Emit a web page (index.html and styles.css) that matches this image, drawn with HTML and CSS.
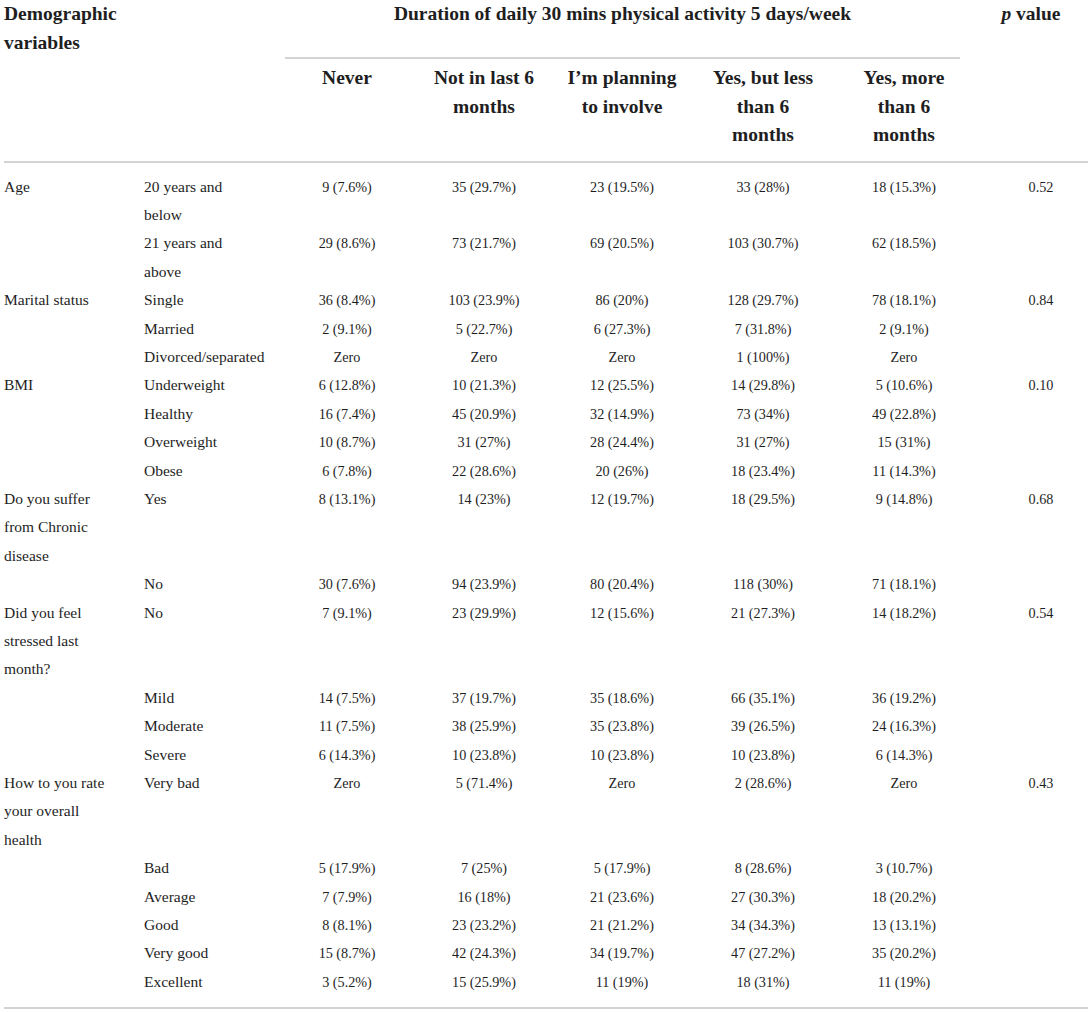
FILE: index.html
```html
<!DOCTYPE html>
<html lang="en">
<head>
<meta charset="utf-8">
<title>Duration of daily physical activity by demographic variables</title>
<link rel="stylesheet" href="styles.css">
</head>
<body>
<table class="stats">
  <colgroup>
    <col class="c-var"><col class="c-sub"><col class="c-never"><col class="c-notin"><col class="c-plan"><col class="c-less"><col class="c-more"><col class="c-p">
  </colgroup>
  <thead>
    <tr class="head-top">
      <th class="h-var" colspan="2" rowspan="2">Demographic<br>variables</th>
      <th class="h-span" colspan="5"><div class="span-title">Duration of daily 30 mins physical activity 5 days/week</div></th>
      <th class="h-p" rowspan="2"><i>p</i> value</th>
    </tr>
    <tr class="head-sub">
      <th>Never</th>
      <th>Not in last 6<br>months</th>
      <th>I’m planning<br>to involve</th>
      <th>Yes, but less<br>than 6<br>months</th>
      <th>Yes, more<br>than 6<br>months</th>
    </tr>
  </thead>
  <tbody>
    <tr class="first">
      <td class="lbl">Age</td><td class="lbl">20 years and<br>below</td>
      <td class="num">9 (7.6%)</td><td class="num">35 (29.7%)</td><td class="num">23 (19.5%)</td><td class="num">33 (28%)</td><td class="num">18 (15.3%)</td><td class="num pv">0.52</td>
    </tr>
    <tr>
      <td class="lbl"></td><td class="lbl">21 years and<br>above</td>
      <td class="num">29 (8.6%)</td><td class="num">73 (21.7%)</td><td class="num">69 (20.5%)</td><td class="num">103 (30.7%)</td><td class="num">62 (18.5%)</td><td class="num pv"></td>
    </tr>
    <tr>
      <td class="lbl">Marital status</td><td class="lbl">Single</td>
      <td class="num">36 (8.4%)</td><td class="num">103 (23.9%)</td><td class="num">86 (20%)</td><td class="num">128 (29.7%)</td><td class="num">78 (18.1%)</td><td class="num pv">0.84</td>
    </tr>
    <tr>
      <td class="lbl"></td><td class="lbl">Married</td>
      <td class="num">2 (9.1%)</td><td class="num">5 (22.7%)</td><td class="num">6 (27.3%)</td><td class="num">7 (31.8%)</td><td class="num">2 (9.1%)</td><td class="num pv"></td>
    </tr>
    <tr>
      <td class="lbl"></td><td class="lbl">Divorced/separated</td>
      <td class="num">Zero</td><td class="num">Zero</td><td class="num">Zero</td><td class="num">1 (100%)</td><td class="num">Zero</td><td class="num pv"></td>
    </tr>
    <tr>
      <td class="lbl">BMI</td><td class="lbl">Underweight</td>
      <td class="num">6 (12.8%)</td><td class="num">10 (21.3%)</td><td class="num">12 (25.5%)</td><td class="num">14 (29.8%)</td><td class="num">5 (10.6%)</td><td class="num pv">0.10</td>
    </tr>
    <tr>
      <td class="lbl"></td><td class="lbl">Healthy</td>
      <td class="num">16 (7.4%)</td><td class="num">45 (20.9%)</td><td class="num">32 (14.9%)</td><td class="num">73 (34%)</td><td class="num">49 (22.8%)</td><td class="num pv"></td>
    </tr>
    <tr>
      <td class="lbl"></td><td class="lbl">Overweight</td>
      <td class="num">10 (8.7%)</td><td class="num">31 (27%)</td><td class="num">28 (24.4%)</td><td class="num">31 (27%)</td><td class="num">15 (31%)</td><td class="num pv"></td>
    </tr>
    <tr>
      <td class="lbl"></td><td class="lbl">Obese</td>
      <td class="num">6 (7.8%)</td><td class="num">22 (28.6%)</td><td class="num">20 (26%)</td><td class="num">18 (23.4%)</td><td class="num">11 (14.3%)</td><td class="num pv"></td>
    </tr>
    <tr>
      <td class="lbl">Do you suffer<br>from Chronic<br>disease</td><td class="lbl">Yes</td>
      <td class="num">8 (13.1%)</td><td class="num">14 (23%)</td><td class="num">12 (19.7%)</td><td class="num">18 (29.5%)</td><td class="num">9 (14.8%)</td><td class="num pv">0.68</td>
    </tr>
    <tr>
      <td class="lbl"></td><td class="lbl">No</td>
      <td class="num">30 (7.6%)</td><td class="num">94 (23.9%)</td><td class="num">80 (20.4%)</td><td class="num">118 (30%)</td><td class="num">71 (18.1%)</td><td class="num pv"></td>
    </tr>
    <tr>
      <td class="lbl">Did you feel<br>stressed last<br>month?</td><td class="lbl">No</td>
      <td class="num">7 (9.1%)</td><td class="num">23 (29.9%)</td><td class="num">12 (15.6%)</td><td class="num">21 (27.3%)</td><td class="num">14 (18.2%)</td><td class="num pv">0.54</td>
    </tr>
    <tr>
      <td class="lbl"></td><td class="lbl">Mild</td>
      <td class="num">14 (7.5%)</td><td class="num">37 (19.7%)</td><td class="num">35 (18.6%)</td><td class="num">66 (35.1%)</td><td class="num">36 (19.2%)</td><td class="num pv"></td>
    </tr>
    <tr>
      <td class="lbl"></td><td class="lbl">Moderate</td>
      <td class="num">11 (7.5%)</td><td class="num">38 (25.9%)</td><td class="num">35 (23.8%)</td><td class="num">39 (26.5%)</td><td class="num">24 (16.3%)</td><td class="num pv"></td>
    </tr>
    <tr>
      <td class="lbl"></td><td class="lbl">Severe</td>
      <td class="num">6 (14.3%)</td><td class="num">10 (23.8%)</td><td class="num">10 (23.8%)</td><td class="num">10 (23.8%)</td><td class="num">6 (14.3%)</td><td class="num pv"></td>
    </tr>
    <tr>
      <td class="lbl">How to you rate<br>your overall<br>health</td><td class="lbl">Very bad</td>
      <td class="num">Zero</td><td class="num">5 (71.4%)</td><td class="num">Zero</td><td class="num">2 (28.6%)</td><td class="num">Zero</td><td class="num pv">0.43</td>
    </tr>
    <tr>
      <td class="lbl"></td><td class="lbl">Bad</td>
      <td class="num">5 (17.9%)</td><td class="num">7 (25%)</td><td class="num">5 (17.9%)</td><td class="num">8 (28.6%)</td><td class="num">3 (10.7%)</td><td class="num pv"></td>
    </tr>
    <tr>
      <td class="lbl"></td><td class="lbl">Average</td>
      <td class="num">7 (7.9%)</td><td class="num">16 (18%)</td><td class="num">21 (23.6%)</td><td class="num">27 (30.3%)</td><td class="num">18 (20.2%)</td><td class="num pv"></td>
    </tr>
    <tr>
      <td class="lbl"></td><td class="lbl">Good</td>
      <td class="num">8 (8.1%)</td><td class="num">23 (23.2%)</td><td class="num">21 (21.2%)</td><td class="num">34 (34.3%)</td><td class="num">13 (13.1%)</td><td class="num pv"></td>
    </tr>
    <tr>
      <td class="lbl"></td><td class="lbl">Very good</td>
      <td class="num">15 (8.7%)</td><td class="num">42 (24.3%)</td><td class="num">34 (19.7%)</td><td class="num">47 (27.2%)</td><td class="num">35 (20.2%)</td><td class="num pv"></td>
    </tr>
    <tr class="last">
      <td class="lbl"></td><td class="lbl">Excellent</td>
      <td class="num">3 (5.2%)</td><td class="num">15 (25.9%)</td><td class="num">11 (19%)</td><td class="num">18 (31%)</td><td class="num">11 (19%)</td><td class="num pv"></td>
    </tr>
  </tbody>
</table>
</body>
</html>
```

FILE: styles.css
```css
html, body {
  margin: 0;
  padding: 0;
  background: #ffffff;
}

body {
  font-family: "Liberation Serif", "Times New Roman", serif;
  color: #1e1e1e;
}

.stats {
  table-layout: fixed;
  border-collapse: collapse;
  width: 1084px;
  margin-left: 4px;
}

.c-var { width: 140px; }
.c-sub { width: 134px; }
.c-never { width: 138px; }
.c-notin { width: 136px; }
.c-plan { width: 140px; }
.c-less { width: 142px; }
.c-more { width: 140px; }
.c-p { width: 114px; }

.stats th {
  font-weight: bold;
  font-size: 19.5px;
  line-height: 28.5px;
  vertical-align: top;
  padding: 0;
  text-align: center;
}

.stats th.h-var {
  text-align: left;
  border-bottom: 2px solid #d3d3d3;
}

.stats th.h-p {
  border-bottom: 2px solid #d3d3d3;
}

.stats th.h-span {
  padding: 0;
}

.span-title {
  box-sizing: border-box;
  height: 59px;
  margin: 0 14px 0 7px;
  border-bottom: 2px solid #d3d3d3;
}

.head-sub th {
  padding: 5px 0 11px;
  border-bottom: 2px solid #d3d3d3;
}

.stats td {
  padding: 0;
  vertical-align: top;
  line-height: 28.4px;
}

.stats td.lbl {
  font-size: 15.5px;
  text-align: left;
}

.stats td.num {
  font-size: 14.2px;
  text-align: center;
}

.stats td.pv {
  padding-left: 20px;
}

.stats tr.first td {
  padding-top: 10px;
}

.stats tr.last td {
  padding-bottom: 11px;
  border-bottom: 2px solid #d3d3d3;
}
```
